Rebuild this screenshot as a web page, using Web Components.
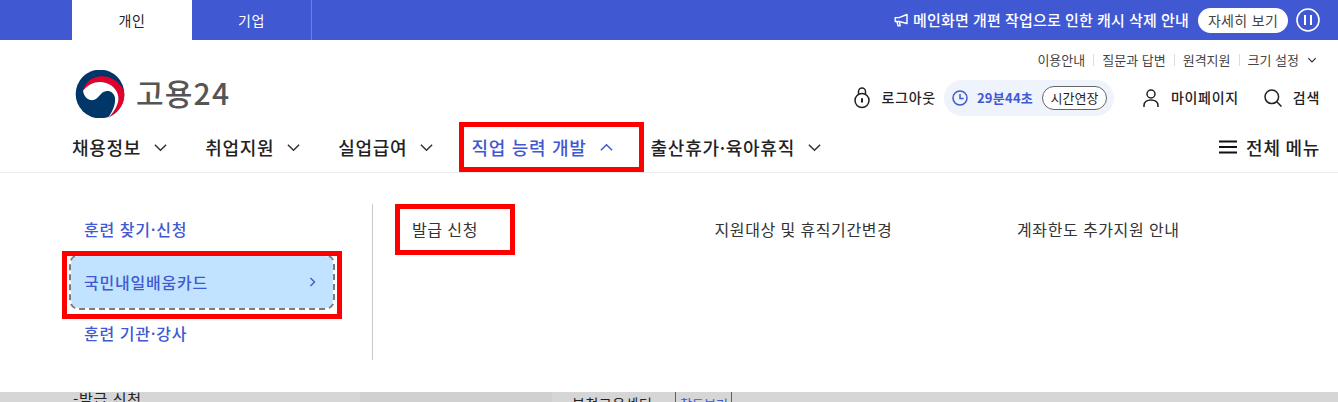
<!DOCTYPE html>
<html lang="ko">
<head>
<meta charset="utf-8">
<title>고용24</title>
<style>
  html, body { margin: 0; height: 402px; overflow: hidden; background: #fff; }
  body { font-family: "Noto Sans CJK KR", "Noto Sans", sans-serif; color: #222; }
</style>
</head>
<body>
<top-bar></top-bar>
<site-header></site-header>
<mega-menu></mega-menu>
<page-strip></page-strip>

<script>
const chevron = (d, size, color, sw = 1.6) => `
  <svg width="${size}" height="${size}" viewBox="0 0 16 16" fill="none" stroke="${color}" stroke-width="${sw}">
    <path d="${d === "up" ? "M2 11L8 5l6 6" : "M2 5l6 6 6-6"}"/>
  </svg>`;

class TopBar extends HTMLElement {
  constructor() {
    super();
    this.attachShadow({ mode: "open" }).innerHTML = `
      <style>
        :host { display: flex; height: 40px; background: #4059d3; padding: 0 18px 0 72px; align-items: stretch; color: #fff; }
        .tab { width: 120px; display: flex; align-items: center; justify-content: center; font-size: 14px; letter-spacing: .7px; padding-bottom: 1px; box-sizing: border-box; }
        .on { background: #fff; color: #222; }
        .off { width: 120px; border-right: 1px solid #6b7fe0; }
        .notice { margin-left: auto; display: flex; align-items: center; }
        .notice svg.mega { margin-right: 5px; }
        .msg { font-size: 15px; font-weight: 500; letter-spacing: .17px; word-spacing: -.3px; margin-right: 9px; padding-bottom: 2px; }
        .more { width: 90px; height: 25px; border-radius: 13px; background: #fff; color: #444; font-size: 14px; display: flex; align-items: center; justify-content: center; letter-spacing: .3px; margin-right: 8px; }
        .pause { display: block; }
      </style>
      <div class="tab on">개인</div>
      <div class="tab off">기업</div>
      <div class="notice">
        <svg class="mega" width="14" height="14" viewBox="0 0 14 14" fill="none" stroke="#fff" stroke-width="1.4" stroke-linejoin="round">
          <path d="M13 1.5v9L5 8.5H1.2V4.6H5z"/><path d="M3 8.6l1 4.2h2.2L5.4 9"/>
        </svg>
        <span class="msg">메인화면 개편 작업으로 인한 캐시 삭제 안내</span>
        <span class="more">자세히 보기</span>
        <svg class="pause" width="24" height="24" viewBox="0 0 24 24" fill="none" stroke="#fff">
          <circle cx="12" cy="12" r="11" stroke-width="1.6"/>
          <path d="M9 7v10M15 7v10" stroke-width="2"/>
        </svg>
      </div>`;
  }
}
customElements.define("top-bar", TopBar);

class UtilLinks extends HTMLElement {
  constructor() {
    super();
    this.attachShadow({ mode: "open" }).innerHTML = `
      <style>
        :host { display: flex; justify-content: flex-end; align-items: center; height: 40px; font-size: 13px; color: #444; letter-spacing: 0; }
        span { padding-bottom: 2px; }
        i { width: 1px; height: 12px; background: #ddd; margin: 0 8px; }
        svg { margin: 0 2px 0 8px; }
      </style>
      <span>이용안내</span><i></i><span>질문과 답변</span><i></i><span>원격지원</span><i></i><span>크기 설정</span>
      ${chevron("down", 10, "#333", 2)}`;
  }
}
customElements.define("util-links", UtilLinks);

class LogoMark extends HTMLElement {
  constructor() {
    super();
    this.attachShadow({ mode: "open" }).innerHTML = `
      <style>
        :host { display: flex; align-items: center; gap: 11px; }
        .name { font-size: 30px; font-weight: 500; color: #555; letter-spacing: 1.2px; line-height: 1; padding-bottom: 4px; }
        svg { display: block; }
      </style>
      <svg width="50" height="48" viewBox="0 0 150 144">
        <circle cx="75" cy="72" r="73" fill="#003668"/>
        <path d="M24 62C32 32 58 18 82 19c33 2 65 26 66 56 0 30-20 55-48 68 18-18 33-43 30-63-4-28-30-44-55-44-20 0-37 10-51 26z" fill="#e4002b"/>
        <path d="M24 62C38 46 55 36 75 36c25 0 51 16 55 44 3 20-12 45-30 63 12-18 22-38 20-58-2-22-27-29-42-13-7 7-12 15-22 18-15 3-29-8-32-28z" fill="#fff"/>
      </svg>
      <span class="name">고용24</span>`;
  }
}
customElements.define("logo-mark", LogoMark);

class UserTools extends HTMLElement {
  constructor() {
    super();
    this.attachShadow({ mode: "open" }).innerHTML = `
      <style>
        :host { display: flex; align-items: center; height: 36px; margin-right: -1px; font-size: 14px; font-weight: 500; letter-spacing: .7px; color: #222; }
        svg { display: block; flex: none; }
        .label { margin-left: 12px; padding-bottom: 2px; }
        .timer { margin-left: 8px; width: 170px; box-sizing: border-box; height: 36px; border-radius: 18px; background: #eff3fc; display: flex; align-items: center; padding-left: 8px; }
        .left { margin-left: 9px; color: #4059d3; font-size: 13px; font-weight: 700; letter-spacing: .25px; padding-bottom: 2px; }
        .ext { margin-left: 9px; width: 65px; height: 24px; box-sizing: border-box; border: 1px solid #666; border-radius: 12px; background: #fff; display: flex; align-items: center; justify-content: center; font-size: 13px; font-weight: 400; letter-spacing: 0; padding-bottom: 1px; }
        .my { margin-left: 29px; }
        .find { margin-left: 25px; }
      </style>
      <svg width="16" height="22" viewBox="0 0 16 22" fill="none" stroke="#222" stroke-width="1.5">
        <circle cx="8" cy="13.5" r="7"/><path d="M4.5 7.5V4.5a3.5 3.5 0 0 1 7 0v3"/>
        <path d="M8 12v3.5" stroke-width="2"/><circle cx="8" cy="12" r="1" fill="#222" stroke="none"/>
      </svg>
      <span class="label">로그아웃</span>
      <div class="timer">
        <svg width="16" height="16" viewBox="0 0 16 16" fill="none" stroke="#4059d3" stroke-width="1.5">
          <circle cx="8" cy="8" r="7"/><path d="M8 4v4.4h3.6"/>
        </svg>
        <span class="left">29분44초</span>
        <span class="ext">시간연장</span>
      </div>
      <svg class="my" width="16" height="18" viewBox="0 0 16 18" fill="none" stroke="#222" stroke-width="1.5">
        <circle cx="8" cy="5" r="4"/><path d="M1 18v-1.5C1 13 4 11 8 11s7 2 7 5.5V18"/>
      </svg>
      <span class="label">마이페이지</span>
      <svg class="find" width="18" height="18" viewBox="0 0 18 18" fill="none" stroke="#222" stroke-width="1.5">
        <circle cx="7.8" cy="7.8" r="6.8"/><path d="M12.8 12.8L17.5 17.5"/>
      </svg>
      <span class="label" style="margin-left:11px">검색</span>`;
  }
}
customElements.define("user-tools", UserTools);

class NavItem extends HTMLElement {
  constructor() {
    super();
    this.attachShadow({ mode: "open" });
  }
  connectedCallback() {
    const open = this.hasAttribute("open");
    this.shadowRoot.innerHTML = `
      <style>
        :host { display: flex; align-items: center; gap: 12px; position: relative; padding-bottom: 2px; box-sizing: border-box; font-size: 18px; font-weight: 500; letter-spacing: .72px; color: ${open ? "#4059d3" : "#222"}; }
        :host([open])::after { content: ""; position: absolute; left: -12px; right: -30px; top: -1px; height: 50px; box-sizing: border-box; border: 5px solid #f00; }
        svg { display: block; }
      </style>
      <slot></slot>
      ${chevron(open ? "up" : "down", 15, open ? "#4059d3" : "#333")}`;
  }
}
customElements.define("nav-item", NavItem);

class SiteHeader extends HTMLElement {
  constructor() {
    super();
    this.attachShadow({ mode: "open" }).innerHTML = `
      <style>
        :host { display: block; height: 133px; box-sizing: border-box; padding: 0 19px 0 72px; border-bottom: 1px solid #ebebeb; }
        .brand { display: flex; justify-content: space-between; align-items: center; height: 36px; }
        logo-mark { margin-left: 3px; margin-bottom: 9px; }
        nav { display: flex; gap: 37px; height: 50px; margin-top: 7px; align-items: stretch; }
        .all { margin-left: auto; display: flex; align-items: center; gap: 9px; padding-bottom: 2px; box-sizing: border-box; font-size: 18px; font-weight: 500; letter-spacing: .72px; word-spacing: -1px; margin-right: -1px; }
        svg { display: block; }
      </style>
      <util-links></util-links>
      <div class="brand">
        <logo-mark></logo-mark>
        <user-tools></user-tools>
      </div>
      <nav>
        <nav-item>채용정보</nav-item>
        <nav-item>취업지원</nav-item>
        <nav-item>실업급여</nav-item>
        <nav-item open>직업 능력 개발</nav-item>
        <nav-item>출산휴가·육아휴직</nav-item>
        <div class="all">
          <svg width="18" height="14" viewBox="0 0 18 14" fill="none" stroke="#111" stroke-width="2">
            <path d="M0 1.5h18M0 7h18M0 12.5h18"/>
          </svg>
          전체 메뉴
        </div>
      </nav>`;
  }
}
customElements.define("site-header", SiteHeader);

class SideLink extends HTMLElement {
  constructor() {
    super();
    this.attachShadow({ mode: "open" }).innerHTML = `
      <style>
        :host { display: flex; align-items: center; justify-content: space-between; height: 52px; padding: 0 16px 2px 13px; box-sizing: border-box; font-size: 16px; font-weight: 500; color: #4059d3; letter-spacing: .78px; word-spacing: -.6px; position: relative; }
        :host([active]) { background: #c1e3ff; border-radius: 8px; outline: 2px dashed #7b7b7b; padding-bottom: 0; }
        :host([active])::after { content: ""; position: absolute; left: -9px; right: -9px; top: -5px; bottom: -11px; box-sizing: border-box; border: 5px solid #f00; }
        svg { display: none; }
        :host([active]) svg { display: block; }
      </style>
      <slot></slot>
      <svg width="8" height="10" viewBox="0 0 8 10" fill="none" stroke="#4059d3" stroke-width="1.4"><path d="M1.5 1l4 4-4 4"/></svg>`;
  }
}
customElements.define("side-link", SideLink);

class SubLink extends HTMLElement {
  constructor() {
    super();
    this.attachShadow({ mode: "open" }).innerHTML = `
      <style>
        :host { display: flex; align-items: center; height: 52px; padding-bottom: 3px; box-sizing: border-box; font-size: 16px; color: #333; letter-spacing: .6px; word-spacing: -.4px; position: relative; width: 302.5px; }
        :host([marked])::after { content: ""; position: absolute; left: -17px; top: 0; width: 120px; height: 51px; box-sizing: border-box; border: 5px solid #f00; }
      </style>
      <slot></slot>`;
  }
}
customElements.define("sub-link", SubLink);

class MegaMenu extends HTMLElement {
  constructor() {
    super();
    this.attachShadow({ mode: "open" }).innerHTML = `
      <style>
        :host { display: flex; height: 219px; box-sizing: border-box; padding: 31px 0 0 71px; background: #fff; align-items: flex-start; }
        .side { width: 262px; }
        .rule { width: 1px; height: 156px; background: #c8c8c8; margin: 0 39px; }
        .subs { display: flex; }
      </style>
      <div class="side">
        <side-link>훈련 찾기·신청</side-link>
        <side-link active>국민내일배움카드</side-link>
        <side-link>훈련 기관·강사</side-link>
      </div>
      <div class="rule"></div>
      <div class="subs">
        <sub-link marked>발급 신청</sub-link>
        <sub-link>지원대상 및 휴직기간변경</sub-link>
        <sub-link>계좌한도 추가지원 안내</sub-link>
      </div>`;
  }
}
customElements.define("mega-menu", MegaMenu);

class PageStrip extends HTMLElement {
  constructor() {
    super();
    this.attachShadow({ mode: "open" }).innerHTML = `
      <style>
        :host { display: flex; height: 10px; overflow: hidden; background: #d6d6d6; font-size: 15px; line-height: 20px; color: #222; }
        .a { width: 360px; padding-left: 73px; box-sizing: border-box; margin-top: -3px; letter-spacing: .7px; }
        .b { width: 192px; height: 10px; background: #d0d0d0; }
        .c { width: 123px; padding-left: 20px; box-sizing: border-box; margin-top: 1px; font-size: 14px; letter-spacing: .5px; }
        .d { width: 57px; height: 10px; box-sizing: border-box; border: solid #4059d3; border-width: 0 1px; color: #4059d3; font-size: 13px; padding-left: 4px; line-height: 24px; }
      </style>
      <div class="a">-발급 신청</div>
      <div class="b"></div>
      <div class="c">부천고용센터</div>
      <div class="d">찾도보기</div>`;
  }
}
customElements.define("page-strip", PageStrip);
</script>
</body>
</html>
